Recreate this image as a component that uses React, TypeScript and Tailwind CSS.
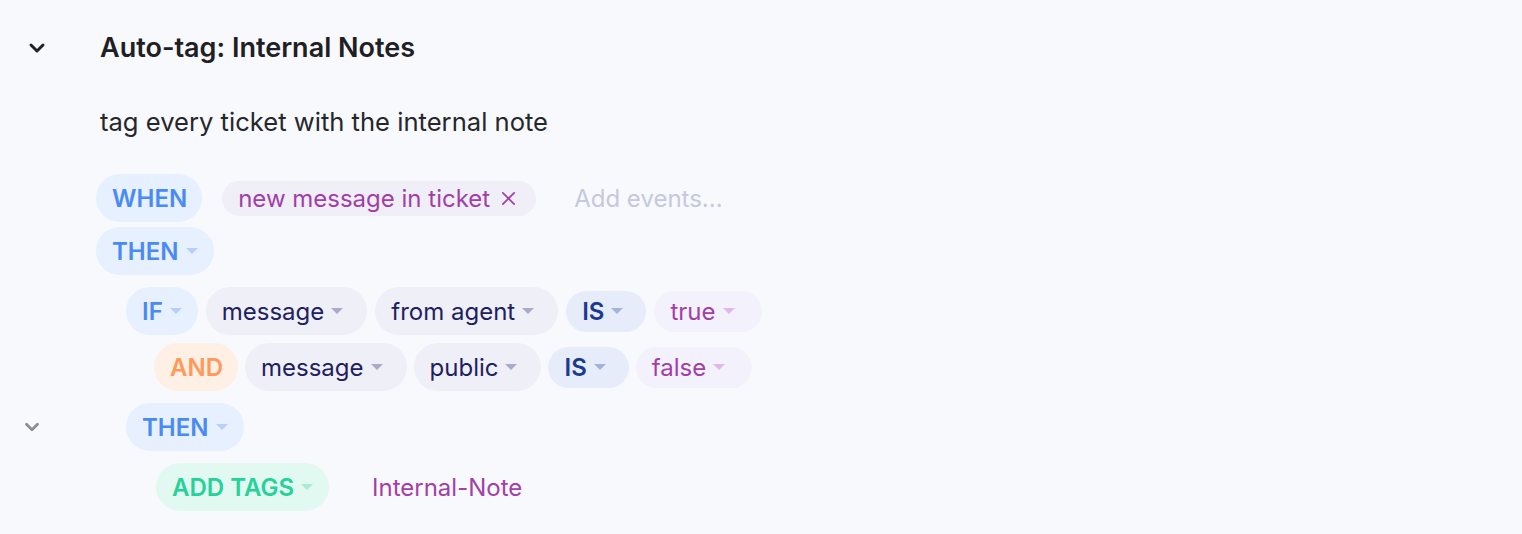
import React from "react";

type Tone = "blue" | "gray" | "is" | "value" | "orange" | "green";

const TONES: Record<Tone, { pill: string; caret: string }> = {
  blue: { pill: "bg-[#e7f0fe] text-[#4a8af5] font-semibold pr-[16px]", caret: "border-t-[#b9cff8]" },
  gray: { pill: "bg-[#efeff8] text-[#1e2160] pr-[24px]", caret: "border-t-[#a9abc8]" },
  is: { pill: "bg-[#e6ecf9] text-[#1c3991] font-semibold pr-[23px]", caret: "border-t-[#a6b4dc]" },
  value: { pill: "bg-[#f3f1fb] text-[#a13fa6] pr-[27px]", caret: "border-t-[#e2b8e8]" },
  orange: { pill: "bg-[#fff0e5] text-[#ff9a5b] font-semibold", caret: "border-t-[#ffc9a6]" },
  green: { pill: "bg-[#e2f9f1] text-[#25d29a] font-semibold pr-[16px]", caret: "border-t-[#a8ebd4]" },
};

function Caret({ tone }: { tone: Tone }) {
  return (
    <span
      className={`ml-[7px] inline-block h-0 w-0 border-x-[6px] border-t-[6px] border-x-transparent ${TONES[tone].caret}`}
    />
  );
}

function Pill({
  tone,
  children,
  caret = true,
  size = "lg",
}: {
  tone: Tone;
  children: React.ReactNode;
  caret?: boolean;
  size?: "lg" | "sm";
}) {
  const pad = size === "lg" ? "h-[48px] pl-[16px]" : "h-[41px] pl-[16px]";
  return (
    <span
      className={`inline-flex items-center rounded-full ${pad} ${TONES[tone].pill} ${caret ? "" : "!pl-[16px] !pr-[15px]"}`}
    >
      {children}
      {caret && <Caret tone={tone} />}
    </span>
  );
}

function Chevron({ className }: { className: string }) {
  return (
    <svg viewBox="0 0 24 24" fill="none" strokeWidth={3} strokeLinecap="round" strokeLinejoin="round" className={className}>
      <path d="M6 9l6 6 6-6" />
    </svg>
  );
}

export default function App() {
  return (
    <main className="min-h-[534px] w-full bg-[#f8f9fd] font-['Inter',sans-serif] text-[24px] leading-[29px]">
      {/* Header */}
      <div className="flex items-center pt-[32px]">
        <div className="flex w-[100px] justify-start pl-[25px]">
          <Chevron className="h-[24px] w-[24px] stroke-[#222327]" />
        </div>
        <h1 className="text-[27px] font-semibold leading-[32px] text-[#1f2024]">Auto-tag: Internal Notes</h1>
      </div>

      <p className="mt-[42px] pl-[100px] text-[25.6px] leading-[31px] text-[#26272b]">
        tag every ticket with the internal note
      </p>

      {/* Rule */}
      <div className="mt-[37px] flex flex-col gap-[5px] pl-[96px]">
        <div className="flex items-center">
          <Pill tone="blue" caret={false}>WHEN</Pill>
          <span className="ml-[20px] inline-flex h-[35px] items-center rounded-full bg-[#f0eff8] pl-[16px] pr-[20px] text-[#a23ea7]">
            new message in ticket
            <svg viewBox="0 0 16 16" className="ml-[11px] h-[15px] w-[15px] stroke-[#a23ea7]" fill="none" strokeWidth={1.8} strokeLinecap="round">
              <path d="M2 2l12 12M14 2L2 14" />
            </svg>
          </span>
          <span className="ml-[38px] text-[#c6c8dc]">Add events...</span>
        </div>

        <div className="flex">
          <Pill tone="blue">THEN</Pill>
        </div>

        <div className="mt-[7px] flex items-center gap-[8px] pl-[30px]">
          <Pill tone="blue">IF</Pill>
          <Pill tone="gray">message</Pill>
          <Pill tone="gray">from agent</Pill>
          <Pill tone="is" size="sm">IS</Pill>
          <Pill tone="value" size="sm">true</Pill>
        </div>

        <div className="mt-[3px] flex items-center gap-[7px] pl-[58px]">
          <Pill tone="orange" caret={false}>AND</Pill>
          <Pill tone="gray">message</Pill>
          <Pill tone="gray">public</Pill>
          <Pill tone="is" size="sm">IS</Pill>
          <Pill tone="value" size="sm">false</Pill>
        </div>

        <div className="relative mt-[7px] flex items-center pl-[30px]">
          <Chevron className="absolute left-[-75px] h-[22px] w-[22px] stroke-[#8d8e94]" />
          <Pill tone="blue">THEN</Pill>
        </div>

        <div className="mt-[7px] flex items-center pl-[60px]">
          <Pill tone="green">ADD TAGS</Pill>
          <span className="ml-[43px] text-[#a33fa6]">Internal-Note</span>
        </div>
      </div>
    </main>
  );
}
